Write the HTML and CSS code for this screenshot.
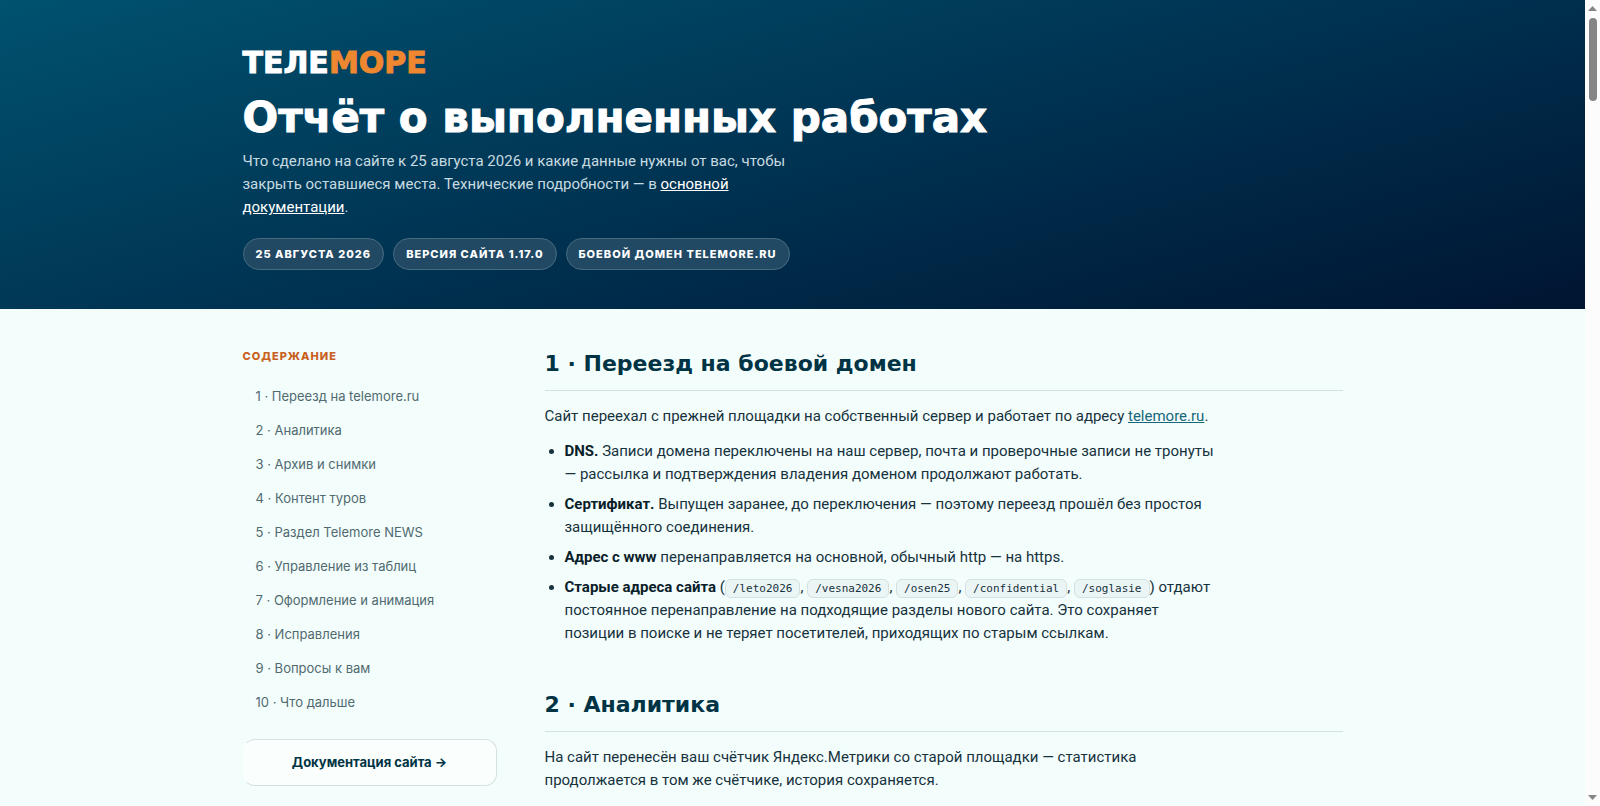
FILE: index.html
```
<!DOCTYPE html>
<html lang="ru">

<head>
    <meta charset="UTF-8">
    <meta name="viewport" content="width=device-width, initial-scale=1.0">
    <title>Телеморе: отчёт о выполненных работах</title>
    <link rel="stylesheet" href="styles.css">
</head>

<body>

    <div class="page">
        <header class="hero">
            <div class="container">
                <div class="logo">ТЕЛЕ<span>МОРЕ</span></div>
                <h1>Отчёт о выполненных работах</h1>
                <p class="lead">Что сделано на сайте к 25 августа 2026 и какие данные нужны от вас, чтобы закрыть оставшиеся места. Технические подробности — в <a href="#docs">основной документации</a>.</p>
                <ul class="badges">
                    <li>25 августа 2026</li>
                    <li>Версия сайта 1.17.0</li>
                    <li>Боевой домен telemore.ru</li>
                </ul>
            </div>
        </header>

        <div class="container layout">
            <nav class="toc" aria-label="Содержание">
                <p class="toc-title">Содержание</p>
                <ul>
                    <li><a href="#s1">1 · Переезд на telemore.ru</a></li>
                    <li><a href="#s2">2 · Аналитика</a></li>
                    <li><a href="#s3">3 · Архив и снимки</a></li>
                    <li><a href="#s4">4 · Контент туров</a></li>
                    <li><a href="#s5">5 · Раздел Telemore NEWS</a></li>
                    <li><a href="#s6">6 · Управление из таблиц</a></li>
                    <li><a href="#s7">7 · Оформление и анимация</a></li>
                    <li><a href="#s8">8 · Исправления</a></li>
                    <li><a href="#s9">9 · Вопросы к вам</a></li>
                    <li><a href="#s10">10 · Что дальше</a></li>
                </ul>
                <a class="docs-link" href="#docs">Документация сайта →</a>
            </nav>

            <main>
                <section id="s1">
                    <h2>1 · Переезд на боевой домен</h2>
                    <p>Сайт переехал с прежней площадки на собственный сервер и работает по адресу <a href="#telemore">telemore.ru</a>.</p>
                    <ul>
                        <li><b>DNS.</b> Записи домена переключены на наш сервер, почта и проверочные записи не тронуты — рассылка и подтверждения владения доменом продолжают работать.</li>
                        <li><b>Сертификат.</b> Выпущен заранее, до переключения — поэтому переезд прошёл без простоя защищённого соединения.</li>
                        <li><b>Адрес с www</b> перенаправляется на основной, обычный http — на https.</li>
                        <li><b>Старые адреса сайта</b> (<code>/leto2026</code>, <code>/vesna2026</code>, <code>/osen25</code>, <code>/confidential</code>, <code>/soglasie</code>) отдают постоянное перенаправление на подходящие разделы нового сайта. Это сохраняет позиции в поиске и не теряет посетителей, приходящих по старым ссылкам.</li>
                    </ul>
                </section>
                <section id="s2">
                    <h2>2 · Аналитика</h2>
                    <p>На сайт перенесён ваш счётчик Яндекс.Метрики со старой площадки — статистика продолжается в том же счётчике, история сохраняется.</p>
                </section>
            </main>
        </div>
    </div>

    <div class="scrollbar" aria-hidden="true">
        <svg width="9" height="5" viewBox="0 0 9 5"><path d="M0 5 4.500 0 9 5z"/></svg>
        <div class="thumb"></div>
        <svg class="down" width="9" height="5" viewBox="0 0 9 5"><path d="M0 0h9L4.500 5z"/></svg>
    </div>

</body>

</html>
```

FILE: styles.css
```
* {
    box-sizing: border-box;
}

body {
    margin: 0;
    display: flex;
    min-height: 100vh;
    font: 15px/23px Inter, "Liberation Sans", sans-serif;
    color: #16323c;
    background: #f3fdfc;
}

ul {
    list-style: none;
    margin: 0;
    padding: 0;
}

.page {
    flex: 1;
    min-width: 0;
}

.container {
    max-width: 1148px;
    margin: 0 auto;
    padding: 0 24px;
}

/* hero */
.hero {
    padding: 45px 0 39px;
    color: #fff;
    background: linear-gradient(165deg, #00526f 0%, #00304f 55%, #001532 100%);
}

.logo,
h1,
h2 {
    font-family: "DejaVu Sans", sans-serif;
    font-weight: 700;
}

.logo,
h1 {
    -webkit-text-stroke: 1px;
}

.logo {
    font-size: 30px;
    line-height: 36px;
}

.logo span {
    color: #ee8730;
}

h1 {
    margin: 13px 0 8px;
    font-size: 42px;
    line-height: 48px;
}

.lead,
main {
    font-family: Roboto, "Liberation Sans", sans-serif;
}

.lead {
    max-width: 564px;
    margin: 0 0 19px;
    color: #c8dbe0;
}

.lead a {
    color: #fff;
}

.badges {
    display: flex;
    flex-wrap: wrap;
    gap: 9px;
}

.badges li {
    padding: 4px 12px;
    border: 1px solid #456b80;
    border-radius: 16px;
    background: #214964;
    font-size: 11px;
    line-height: 22px;
    font-weight: 800;
    letter-spacing: 1px;
    text-transform: uppercase;
}

/* columns */
.layout {
    display: grid;
    grid-template-columns: 254px minmax(0, 1fr);
    gap: 48px;
    padding-top: 36px;
}

.toc-title {
    margin: 0 0 12px;
    font-size: 11px;
    line-height: 22px;
    font-weight: 800;
    letter-spacing: 1px;
    text-transform: uppercase;
    color: #c8601c;
}

.toc li a {
    display: block;
    padding: 6px 13px;
    font-size: 13px;
    line-height: 22px;
    color: #506a70;
    text-decoration: none;
}

.docs-link {
    display: block;
    margin-top: 20px;
    padding: 11px;
    border: 1px solid #d5e0e0;
    border-left-color: transparent;
    border-radius: 12px;
    background: #fafffe;
    color: #003344;
    font-size: 13px;
    font-weight: 700;
    text-align: center;
    text-decoration: none;
}

section {
    margin-bottom: 41px;
}

section:last-child {
    margin-bottom: 0;
}

h2 {
    margin: 0 0 14px;
    padding: 3px 0 10px;
    border-bottom: 1px solid #d5e0e0;
    font-size: 22px;
    line-height: 32px;
    color: #003344;
}

section p {
    max-width: 674px;
    margin: 0 0 12px;
}

section:last-child p {
    margin-bottom: 0;
}

section p a {
    color: #176779;
}

section ul {
    max-width: 674px;
    padding-left: 20px;
    list-style: disc;
}

section li {
    margin-bottom: 7px;
}

section b {
    color: #0a2029;
}

code {
    padding: 2px 7px;
    border: 1px solid #d5e0e0;
    border-radius: 6px;
    background: #ecf5f6;
    font: 11px "DejaVu Sans Mono", monospace;
}

/* window scrollbar */
.scrollbar {
    display: flex;
    flex-direction: column;
    align-items: center;
    width: 15px;
    padding: 6px 0;
    background: #fcfcfc;
    fill: #858585;
}

.thumb {
    width: 8px;
    height: 83px;
    margin-top: 7px;
    border-radius: 4px;
    background: #858585;
}

.down {
    margin-top: auto;
}
```
